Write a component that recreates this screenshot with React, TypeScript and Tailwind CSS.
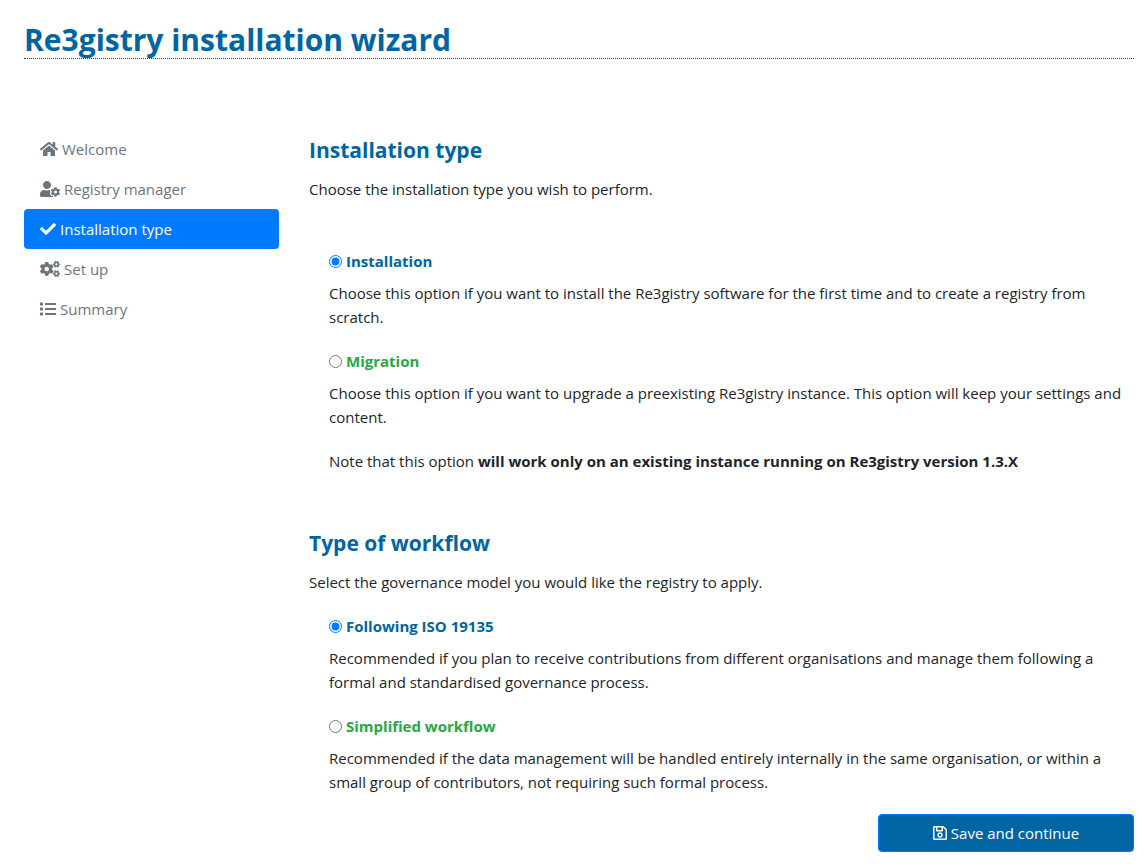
import type { ReactNode } from "react";
import { FaCheck, FaCogs, FaHome, FaList, FaRegSave, FaUserCog } from "react-icons/fa";

const steps = [
  { label: "Welcome", icon: <FaHome className="h-4 w-[18px]" /> },
  { label: "Registry manager", icon: <FaUserCog className="h-4 w-5" /> },
  { label: "Installation type", icon: <FaCheck className="h-4 w-4" />, active: true },
  { label: "Set up", icon: <FaCogs className="h-4 w-5" /> },
  { label: "Summary", icon: <FaList className="h-4 w-4" /> },
];

type OptionProps = {
  id: string;
  group: string;
  title: string;
  tone: string;
  checked?: boolean;
  children: ReactNode;
};

function Option({ id, group, title, tone, checked, children }: OptionProps) {
  return (
    <div className="pl-5">
      <div className="mb-2 flex items-center gap-1">
        <input
          type="radio"
          id={id}
          name={group}
          defaultChecked={checked}
          className="size-[13px] accent-[#007bff]"
        />
        <label htmlFor={id} className={`font-bold ${tone}`}>
          {title}
        </label>
      </div>
      {children}
    </div>
  );
}

export default function App() {
  return (
    <div className="bg-white pt-5 pr-[11px] pb-3 pl-6 font-['Open_Sans','Noto_Sans',sans-serif] text-[15px] leading-6 text-[#212529]">
      <h1 className="border-b border-dotted border-[#004494] pt-px text-[30px] leading-[37px] font-bold text-[#0065a2]">
        Re3gistry installation wizard
      </h1>

      <div className="flex gap-[30px] pt-[70px]">
        <nav className="w-[255px] shrink-0" aria-label="Installation steps">
          {steps.map((step) => (
            <a
              key={step.label}
              href="#"
              aria-current={step.active ? "step" : undefined}
              className={`flex items-center gap-1 rounded px-4 py-2 ${
                step.active ? "bg-[#007bff] text-white" : "text-[#6c757d]"
              }`}
            >
              {step.icon}
              {step.label}
            </a>
          ))}
        </nav>

        <form className="min-w-0 flex-1 pt-2" onSubmit={(e) => e.preventDefault()}>
          <section>
            <h2 className="mb-[14px] text-[21px] leading-[26px] font-bold text-[#0065a2]">Installation type</h2>
            <p className="mb-12">Choose the installation type you wish to perform.</p>
            <div className="flex flex-col gap-5">
              <Option id="install" group="type" title="Installation" tone="text-[#0065a2]" checked>
                <p>
                  Choose this option if you want to install the Re3gistry software for the first time and to
                  create a registry from scratch.
                </p>
              </Option>
              <Option id="migrate" group="type" title="Migration" tone="text-[#28a745]">
                <p className="mb-5">
                  Choose this option if you want to upgrade a preexisting Re3gistry instance. This option will
                  keep your settings and content.
                </p>
                <p>
                  Note that this option{" "}
                  <b className="font-bold">
                    will work only on an existing instance running on Re3gistry version 1.3.X
                  </b>
                </p>
              </Option>
            </div>
          </section>

          <section className="mt-[57px]">
            <h2 className="mb-[14px] text-[21px] leading-[26px] font-bold text-[#0065a2]">Type of workflow</h2>
            <p className="mb-5">Select the governance model you would like the registry to apply.</p>
            <div className="flex flex-col gap-5">
              <Option id="iso" group="workflow" title="Following ISO 19135" tone="text-[#0065a2]" checked>
                <p>
                  Recommended if you plan to receive contributions from different organisations and manage them
                  following a formal and standardised governance process.
                </p>
              </Option>
              <Option id="simple" group="workflow" title="Simplified workflow" tone="text-[#28a745]">
                <p>
                  Recommended if the data management will be handled entirely internally in the same
                  organisation, or within a small group of contributors, not requiring such formal process.
                </p>
              </Option>
            </div>
          </section>

          <div className="mt-5 flex justify-end">
            <button
              type="submit"
              className="flex w-64 items-center justify-center gap-1 rounded border border-[#007bff] bg-[#0065a2] py-[6px] text-white"
            >
              <FaRegSave className="h-4 w-[14px]" />
              Save and continue
            </button>
          </div>
        </form>
      </div>
    </div>
  );
}
